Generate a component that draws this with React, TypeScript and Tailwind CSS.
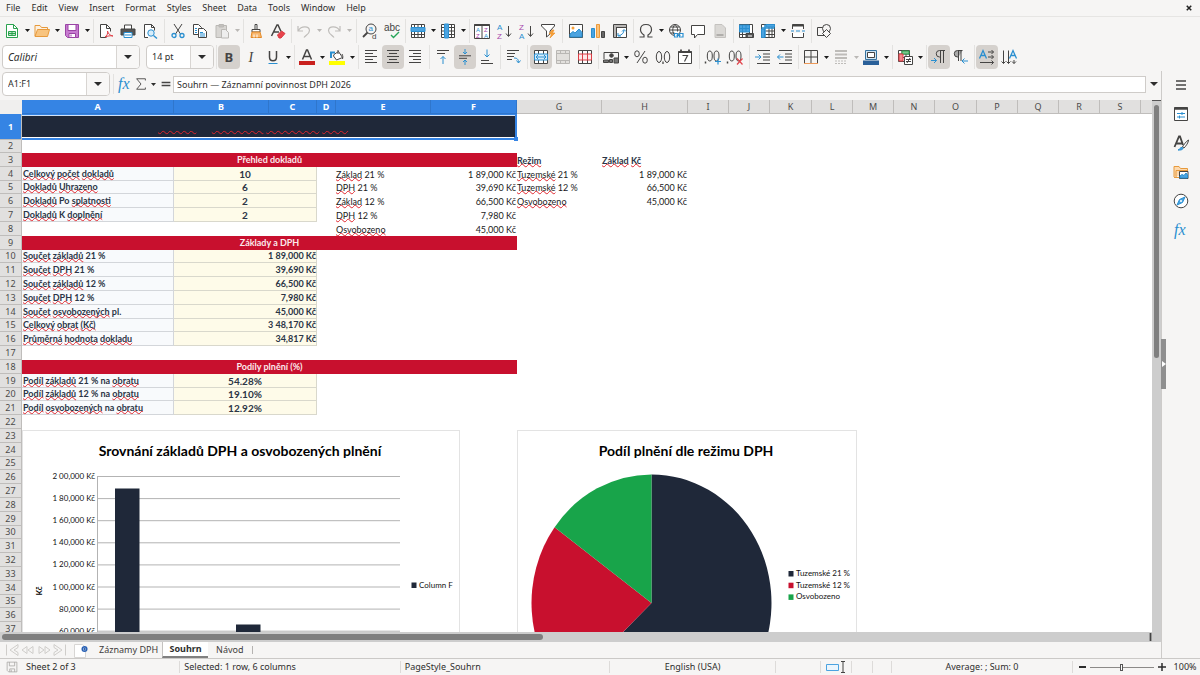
import React from 'react';
import clsx from 'clsx';

const INK = '#454443';
const BLUE = '#2a8fd0';
const NAVY = '#1f2839';
const RED = '#c8102e';
const GREEN = '#18a44a';

type IconProps = { children: React.ReactNode; className?: string };

const Icon: React.FC<IconProps> = ({ children, className }) => (
  <svg viewBox="0 0 16 16" fill="none" stroke={INK} strokeWidth={1} className={clsx('shrink-0 overflow-visible', className || 'size-4')} aria-hidden="true">
    {children}
  </svg>
);

const glyph = { stroke: 'none', fontFamily: 'Liberation Sans, sans-serif' };

const ICONS: Record<string, React.ReactNode> = {
  new: (
    <>
      <path d="M2.5 1.5h7l4 4v9h-11z" fill="#fff" stroke="#2ba24f" />
      <path d="M9.5 1.5v4h4" stroke="#2ba24f" />
      <path d="M4.5 8.5h7v4h-7zM4.5 10.5h7M8 8.5v4" fill="#bfe7c8" stroke="#2ba24f" />
    </>
  ),
  open: (
    <>
      <path d="M1 13V2.5h5l1.5 2h6V7" fill="#fdf0df" stroke="#e79a3c" />
      <path d="M1 13.5L3.5 6.5h12l-2 7z" fill="#f8c47f" stroke="#e79a3c" />
    </>
  ),
  save: (
    <>
      <path d="M1.5 1.5h13v13h-11l-2-2z" fill="#c77bd0" stroke="#9a44a5" />
      <path d="M4 1.5h8v6H4z" fill="#fff" stroke="#9a44a5" />
      <path d="M5 10.5h6.5v4H5z" fill="#fff" stroke="#9a44a5" />
      <path d="M7 11.5v2" stroke="#9a44a5" />
    </>
  ),
  pdf: (
    <>
      <path d="M2.5 14.5v-13h6l4 4v3M2.5 14.5h6" fill="#fff" />
      <path d="M8.5 1.5v4h4" />
      <path d="M7 14c2-1 3-3.5 2.5-6 .8 3 2.5 4.5 5.5 5-3-.6-5 0-8 1z" stroke="#e2434b" />
    </>
  ),
  print: (
    <>
      <path d="M4.5 6V2h7v4" fill="#fff" />
      <path d="M1 6h14v6H1z" fill="#555" />
      <path d="M4 9.5h8v5H4z" fill="#fff" stroke={BLUE} />
      <path d="M5 12h6" stroke={BLUE} />
    </>
  ),
  preview: (
    <>
      <path d="M6 14.5H2.5v-13h7l3 3v3" fill="#fff" />
      <path d="M9.5 1.5v3h3" />
      <circle cx="9" cy="10" r="3.2" fill="#d9eefb" stroke={BLUE} />
      <path d="M11.5 12.5L15 15.5" stroke={BLUE} strokeWidth="1.4" />
    </>
  ),
  cut: (
    <>
      <path d="M4 1l6.5 10M12 1L5.5 11" />
      <circle cx="4" cy="12.5" r="2" stroke={BLUE} strokeWidth="1.3" />
      <circle cx="12" cy="12.5" r="2" stroke={BLUE} strokeWidth="1.3" />
    </>
  ),
  copy: (
    <>
      <path d="M1.5 1.5h5l3 3v7h-8z" fill="#fff" />
      <path d="M6.5 5.5h5l3 3v6h-8z" fill="#fff" />
      <path d="M8 9.5h3M8 11h5M8 13h5M3 5.5h2M3 7.5h2M3 9.5h2" stroke={BLUE} />
    </>
  ),
  paste: (
    <>
      <path d="M2 2.5h10.5v12H2z" fill="#d8d6d3" stroke="#bab8b5" />
      <path d="M5 1.5h4.5V4H5z" fill="#c2c0bd" stroke="#bab8b5" />
      <path d="M7.5 6.5h4l3 3V15h-7z" fill="#eee" stroke="#bab8b5" />
    </>
  ),
  brush: (
    <>
      <path d="M7 1.5h2v5H7zM4 6.5h8V9H4z" fill="#fff" />
      <path d="M4 9l-1 5.5h10.5L12 9z" fill="#f7b76f" stroke="#e58a27" />
      <path d="M6 11.5v3M9 11.5v3" stroke="#fff" />
    </>
  ),
  clear: (
    <>
      <path d="M1.5 13L7 2h1l3 6.5M4 9h5" strokeWidth="1.5" />
      <path d="M7.5 12l4-4 3.5 2.5-4 4.5h-2z" fill="#e8444c" stroke="#d93a42" />
    </>
  ),
  undo: <path d="M2 3v5h5M2.5 7.5C5 3 13 2.5 13.5 7.5 13.5 11 10 12 8 14.5" stroke="#bfbdba" strokeWidth="1.2" />,
  redo: <path d="M14 3v5H9M13.5 7.5C11 3 3 2.5 2.5 7.5 2.5 11 6 12 8 14.5" stroke="#bfbdba" strokeWidth="1.2" />,
  find: (
    <>
      <circle cx="9" cy="6" r="5" />
      <path d="M5.5 9.5L1 14" strokeWidth="1.8" />
      <text x="6.5" y="8" fontSize="8" fill={BLUE} {...glyph}>a</text>
      <text x="10" y="15.5" fontSize="8" fill={INK} {...glyph}>d</text>
    </>
  ),
  spell: (
    <>
      <text x="0" y="8" fontSize="10" fill={INK} {...glyph}>abc</text>
      <path d="M7 12l2.5 2.5L15 9" stroke="#26a559" strokeWidth="1.4" />
    </>
  ),
  row: (
    <>
      <path d="M1.5 1.5h13v13h-13zM1.5 11.5h13M4.5 1.5v13M8 1.5v13M11.5 1.5v13" fill="#fff" />
      <path d="M1 4.5h14v4H1z" fill="#4ba3e0" stroke={BLUE} />
    </>
  ),
  column: (
    <>
      <path d="M1.5 1.5h13v13h-13zM1.5 4.5h13M1.5 8h13M1.5 11.5h13M11.5 1.5v13" fill="#fff" />
      <path d="M4.5 1h4v14h-4z" fill="#4ba3e0" stroke={BLUE} />
    </>
  ),
  sort: (
    <>
      <path d="M.5 1.5h15v14H.5zM8 2v13" fill="#fff" />
      <path d="M.5 2h15" strokeWidth="2" />
      <text x="2" y="8.5" fontSize="6" fill={BLUE} {...glyph}>A</text>
      <text x="2" y="14.5" fontSize="6" fill="#a646ab" {...glyph}>Z</text>
      <text x="10" y="8.5" fontSize="6" fill="#a646ab" {...glyph}>Z</text>
      <text x="10" y="14.5" fontSize="6" fill={BLUE} {...glyph}>A</text>
    </>
  ),
  sortAsc: (
    <>
      <text x="1" y="7" fontSize="8" fill={BLUE} {...glyph}>A</text>
      <text x="1" y="15.5" fontSize="8" fill="#a646ab" {...glyph}>Z</text>
      <path d="M12.5 3v10M10 10.5l2.5 3 2.5-3" />
    </>
  ),
  sortDesc: (
    <>
      <text x="1" y="7" fontSize="8" fill="#a646ab" {...glyph}>Z</text>
      <text x="1" y="15.5" fontSize="8" fill={BLUE} {...glyph}>A</text>
      <path d="M12.5 3v10M10 10.5l2.5 3 2.5-3" />
    </>
  ),
  filter: (
    <>
      <path d="M1.5 1.5h13V3L10 8v3l-3.5 3V8L1.5 3z" fill="#fff" />
      <path d="M12 7l-3 4h2.5L10 15l5-5h-2.5L14 7z" fill="#f7a23b" stroke="#ec8b1f" strokeWidth=".6" />
    </>
  ),
  image: (
    <>
      <path d="M1.5 1.5h13v13h-13z" fill="#fff" />
      <circle cx="5" cy="5" r="1.5" fill="#f7a23b" stroke="none" />
      <path d="M2 14v-3l3-2.5 2 1.5 4-4 3 3.5V14z" fill="#4ba3e0" stroke={BLUE} />
    </>
  ),
  chart: (
    <>
      <path d="M1.5 5.5h3v9h-3z" fill="#4ba3e0" stroke={BLUE} />
      <path d="M6.5 1.5h3v13h-3z" fill="#fbc27a" stroke="#ed9a3a" />
      <path d="M11.5 8.5h3v6h-3z" fill="#666" />
    </>
  ),
  pivot: (
    <>
      <path d="M1.5 1.5h13v13h-13zM1.5 4.5h13M4.5 1.5v13" fill="#fff" />
      <path d="M2 2h12v2H2zM2 4h2v10H2z" fill="#b9b7b5" stroke="none" />
      <path d="M6 10v3h3M6.5 12.5c3 0 5.5-2.5 5.5-5.5M10 8.5l2-2 2 2" stroke={BLUE} />
    </>
  ),
  omega: <path d="M1.5 14H6v-2C3.5 10.5 2.5 9 2.5 6.5c0-3 2.2-5 5.5-5s5.5 2 5.5 5c0 2.5-1 4-3.5 5.5v2h4.5" strokeWidth="1.2" />,
  link: (
    <>
      <circle cx="7" cy="7" r="5.5" fill="#fff" />
      <path d="M1.5 7h11M2.5 4h9M2.5 10h4M7 1.5c-3 3-3 8 0 11M7 1.5c2.5 2.5 3 5 2.5 7" />
      <path d="M6.5 10.5h3V14h-3zM11.5 10.5H15V14h-3.5zM8.5 12.3h4" fill="#fff" stroke={BLUE} strokeWidth="1.2" />
    </>
  ),
  comment: <path d="M1.5 2.5h13v9h-7L4.5 15v-3.5h-3z" fill="#fff" />,
  headerFooter: (
    <>
      <path d="M3 1.5h7L13.5 5v9.5H3z" fill="#dad8d5" stroke="#c4c2bf" />
      <path d="M4.5 12h7" stroke="#b0aeab" strokeWidth="2" />
    </>
  ),
  printArea: (
    <>
      <path d="M1.5 1.5h13v13h-13zM1.5 11.5h13M4.5 1.5v13M11.5 1.5v13" fill="#fff" />
      <path d="M1.5 2h10v7h-10zM4.5 2v7M8 2v7M1.5 5.5h10" fill="#4ba3e0" stroke={BLUE} />
      <path d="M8 10.5h7.5v4H8z" fill="#555" />
      <path d="M10 13h4" stroke="#fff" />
    </>
  ),
  freeze: (
    <>
      <path d="M1.5 1.5h13v13h-13zM5.5 8h9M5.5 11.5h9M9 1.5v13M12 1.5v13" fill="#fff" />
      <path d="M1.5 5h13M5 1.5v13" stroke={BLUE} strokeWidth="1.5" />
      <path d="M1.5 6h3v8.5h-3zM6 1.5h8.5V4H6z" fill="#4ba3e0" stroke={BLUE} />
    </>
  ),
  split: (
    <>
      <path d="M2.5 6V1.5h11V6M2.5 10v4.5h11V10" fill="#fff" />
      <path d="M2.5 2.5h11" strokeWidth="2" />
      <path d="M1 8h3M6 8h4M12 8h3" stroke={BLUE} />
    </>
  ),
  shapes: (
    <>
      <path d="M1.5 4.5h8v8h-8z" />
      <circle cx="10.5" cy="5.5" r="4" fill="#f6f5f4" />
      <path d="M10.5 6.5l4 4-4 4-4-4z" fill="#f6f5f4" />
    </>
  ),
  bold: <text x="3.5" y="12.5" fontSize="13" fontWeight="700" fill={INK} stroke="none" fontFamily="Noto Sans, sans-serif">B</text>,
  italic: <text x="5.5" y="12.5" fontSize="14" fontStyle="italic" fill={INK} stroke="none" fontFamily="Liberation Serif, serif">I</text>,
  underline: (
    <>
      <path d="M4.5 2v6c0 5 7 5 7 0V2" strokeWidth="1.5" />
      <path d="M3.5 14.5h9" stroke={BLUE} />
    </>
  ),
  fontColor: (
    <>
      <path d="M3.5 10.5L7.5 1h1l4 9.5M5 7.5h6" strokeWidth="1.5" />
      <path d="M0 12h16v4H0z" fill="#c9211e" stroke="none" />
    </>
  ),
  highlight: (
    <>
      <path d="M5 5.5l4.5-3 4 6L7.5 11l-3-4z" fill="#fff" />
      <path d="M9 1v4M13 5c1 2 1 3 .5 5" />
      <path d="M2 9V3.5h4" stroke={BLUE} strokeWidth="2" />
      <path d="M0 12h16v4H0z" fill="#ffff00" stroke="none" />
    </>
  ),
  alignLeft: <path d="M2 1.5h12M2 4.5h8M2 7.5h12M2 10.5h8M2 13.5h12" />,
  alignCenter: <path d="M2 1.5h12M4 4.5h8M2 7.5h12M4 10.5h8M2 13.5h12" />,
  alignRight: <path d="M2 1.5h12M6 4.5h8M2 7.5h12M6 10.5h8M2 13.5h12" />,
  alignTop: (
    <>
      <path d="M2 1.5h12M2 4.5h8" />
      <path d="M8 15V7.5M5.5 10L8 7.5l2.5 2.5" stroke={BLUE} />
    </>
  ),
  alignMiddle: (
    <>
      <path d="M2 6.8h12M2 9.3h8" />
      <path d="M8 0v5M6 3l2 2 2-2M8 16v-5M6 13l2-2 2 2" stroke={BLUE} />
    </>
  ),
  alignBottom: (
    <>
      <path d="M2 11.5h8M2 14.5h12" />
      <path d="M8 .5V8M5.5 5.5L8 8l2.5-2.5" stroke={BLUE} />
    </>
  ),
  wrap: (
    <>
      <path d="M2 1.5h12M2 4.5h8M2 7.5h7M2 10.5h5" />
      <path d="M9 9c3 0 4.5 1 4.5 4.5M11.5 11.5l2 2.5 2-2.5" stroke={BLUE} />
    </>
  ),
  merge: (
    <>
      <path d="M1.5 1.5h13v13h-13zM5.5 1.5v13M10.5 1.5v13" fill="#fff" />
      <path d="M1.5 5h13v6h-13z" fill="#d5ecfb" stroke={BLUE} />
      <path d="M3 8h10M5 6L3 8l2 2M11 6l2 2-2 2" stroke={BLUE} />
    </>
  ),
  mergeCells: <path d="M1.5 1.5h13v13h-13zM5.5 1.5v3M10.5 1.5v3M5.5 11.5v3M10.5 11.5v3M1.5 4.5h13v7h-13z" fill="#e2e0dd" stroke="#b9b7b4" />,
  unmerge: (
    <>
      <path d="M1.5 1.5h13v13h-13zM5.5 1.5v13M10.5 1.5v13" fill="#fff" />
      <path d="M1.5 5h13v6h-13zM5.5 5v6M10.5 5v6" fill="#fde8e8" stroke="#dc3c44" />
    </>
  ),
  currency: (
    <>
      <path d="M1 10V3.5h14.5V9" />
      <circle cx="8.5" cy="6.5" r="1.8" fill={INK} />
      <path d="M.5 13.5V11h5v2.5zM6.5 10.5h3v3h-3zM11 9h4.5v5H11z" fill="#777" />
    </>
  ),
  percent: (
    <>
      <ellipse cx="4" cy="4.8" rx="2.3" ry="3" />
      <ellipse cx="12" cy="11.2" rx="2.3" ry="3" />
      <path d="M12 2L4 14" />
    </>
  ),
  number: (
    <>
      <ellipse cx="4" cy="8" rx="2.7" ry="5.5" />
      <ellipse cx="12" cy="8" rx="2.7" ry="5.5" />
      <path d="M8 12.5V15" strokeWidth="1.3" />
    </>
  ),
  date: (
    <>
      <path d="M1.5 2.5h13v12h-13z" fill="#fff" />
      <path d="M1.5 3h13M4 .5v3M12 .5v3" strokeWidth="1.8" />
      <path d="M5.5 6.5h5l-3 6" strokeWidth="1.2" />
    </>
  ),
  addDecimal: (
    <>
      <path d="M.5 12.5v2" strokeWidth="1.5" />
      <ellipse cx="4.8" cy="7" rx="2.5" ry="5" />
      <ellipse cx="11.5" cy="7" rx="2.5" ry="5" />
      <path d="M13 9.5v6M10 12.5h6" stroke={BLUE} strokeWidth="1.2" />
    </>
  ),
  delDecimal: (
    <>
      <path d="M.5 12.5v2" strokeWidth="1.5" />
      <ellipse cx="4.8" cy="7" rx="2.5" ry="5" />
      <ellipse cx="11.5" cy="7" rx="2.5" ry="5" />
      <path d="M10 9.5l5.5 6M15.5 9.5l-5.5 6" stroke="#e2434b" strokeWidth="1.2" />
    </>
  ),
  indent: (
    <>
      <path d="M2 1.5h13M8 5h7M8 8h7M8 11h7M2 14.5h13" />
      <path d="M0 8h6M3.5 5.5L6 8l-2.5 2.5" stroke={BLUE} />
    </>
  ),
  outdent: (
    <>
      <path d="M2 1.5h13M8 5h7M8 8h7M8 11h7M2 14.5h13" />
      <path d="M.5 8h6M3 5.5L.5 8 3 10.5" stroke={BLUE} />
    </>
  ),
  borders: (
    <>
      <path d="M1.5 14V1.5h13V14M8 1.5V14M1.5 8h13" />
      <path d="M1 14.5h14" stroke="#ed9a5a" />
    </>
  ),
  borderStyle: (
    <>
      <path d="M2 2h12M2 5.5h12M2 9h12" stroke="#bebcb9" strokeWidth="1.8" />
      <path d="M2 12h12M2 14.5h12" stroke="#bebcb9" strokeDasharray="2 1" />
    </>
  ),
  borderColor: (
    <>
      <path d="M2.5 1.5h11v9h-11z" fill="#cfe5f5" stroke="#35729f" />
      <path d="M4.5 3.5h7v5h-7z" fill="#fff" />
      <path d="M0 11.5h16V16H0z" fill="#2a6099" stroke="none" />
    </>
  ),
  conditional: (
    <>
      <path d="M1.5 1.5h11v11h-11zM1.5 5h11M1.5 8.5h11M5 1.5v11M9 1.5v11" fill="#fff" />
      <path d="M5 2h7v3H5z" fill="#7cc68d" stroke="#2ba24f" />
      <path d="M2 5h4v7H2z" fill="#f08a8f" stroke="#dc3c44" />
      <path d="M7.5 7.5h8v8h-8z" fill="#fff" />
      <path d="M9 10.5h5M9 12.5h5M13 9l-3 5" />
    </>
  ),
  ltr: (
    <>
      <path d="M9.5 14V1.5M12.5 14V1.5M14 1.5H8.5a3.2 3.2 0 000 6.5h1" />
      <path d="M0 11.5h5.5M3 9l2.5 2.5L3 14" stroke={BLUE} />
    </>
  ),
  rtl: (
    <>
      <path d="M5.5 12V1.5M8 12V1.5M9.5 1.5h-5a3.2 3.2 0 000 6.5h1" fill="#aaa" />
      <path d="M9 12h6M11.5 9.5L9 12l2.5 2.5" stroke={BLUE} />
    </>
  ),
  textHorizontal: (
    <>
      <path d="M.5 9.5L4 1.5l3.5 8M1.8 6.5h4.5" stroke={BLUE} strokeWidth="1.3" />
      <path d="M9 3h5.5M9 8h5.5M1 13.5h13.5M12.5 1l2 2-2 2M12.5 6l2 2-2 2M12.5 11.5l2 2-2 2" />
    </>
  ),
  textVertical: (
    <>
      <path d="M8.5 9.5L12 1.5l3.5 8M9.8 6.5h4.5" stroke={BLUE} strokeWidth="1.3" />
      <path d="M2.5 1.5v13M7.5 1.5v13M13 11v3.5M.5 12.5l2 2 2-2M5.5 12.5l2 2 2-2M11 12.5l2 2 2-2" />
    </>
  ),
  fx: <text x="1" y="13" fontSize="16" fontStyle="italic" fill={BLUE} stroke="none" fontFamily="Liberation Serif, serif">fx</text>,
  sum: <path d="M13 4V2H3l5 6-5 6h10v-2" />,
  equals: <path d="M1 5.5h14M1 10.5h14" strokeWidth="2.5" />,
  menu: <path d="M3 4h10M3 8h10M3 12h10" strokeWidth="1.7" />,
  properties: (
    <>
      <path d="M1.5 1.5h13v13h-13z" fill="#fff" />
      <path d="M1.5 2.5h13" strokeWidth="2.5" />
      <path d="M4 7.5h8M4 11h8M9 6v3M6.5 9.5v3" stroke={BLUE} />
    </>
  ),
  styles: (
    <>
      <path d="M1.5 12L6 1.5h1L10 10M3 8.5h6" strokeWidth="1.8" />
      <path d="M15.5 5c-2 1-5 5-6 7l1.5 1c2-2 4.5-5.5 4.5-8z" fill="#fff" />
      <path d="M5 15c1.5 0 2-3 4-2.5s1 3-4 2.5z" fill="#4ba3e0" stroke={BLUE} />
    </>
  ),
  gallery: (
    <>
      <path d="M1 13V2.5h5l1.5 2h7V7M1 13.5h5M3 13V6.5h12" fill="#fdd9ae" stroke="#e79a3c" />
      <path d="M6.5 7.5H15v7H6.5z" fill="#fff" />
      <path d="M7 14v-2l2-1.5 2 1L13 9l1.5 2v3z" fill="#4ba3e0" stroke={BLUE} />
    </>
  ),
  navigator: (
    <>
      <circle cx="8" cy="8" r="6.8" fill="#fff" />
      <path d="M12 4L9.5 9.5 4 12l2.5-5.5z" fill="#4ba3e0" stroke={BLUE} />
      <circle cx="8" cy="8" r="1" fill="#fff" stroke="none" />
    </>
  ),
  saveMuted: <path d="M1.5 1.5h13v13h-11l-2-2zM4.5 1.5v5h7v-5M5 14.5v-4h6.5v4M7 11.5v3" stroke="#a5a3a0" />,
};

type ToolState = { menu?: boolean; active?: boolean; disabled?: boolean };
type Tool = ({ icon: string; label: string } & ToolState) | 'narrow' | 'wide';

const t = (icon: string, label: string, state: ToolState = {}): Tool => ({ icon, label, ...state });

const STANDARD: Tool[] = [
  t('new', 'New', { menu: true }), t('open', 'Open', { menu: true }), t('save', 'Save', { menu: true }),
  'narrow',
  t('pdf', 'Export as PDF'), t('print', 'Print'), t('preview', 'Print Preview'),
  'wide',
  t('cut', 'Cut'), t('copy', 'Copy'), t('paste', 'Paste', { menu: true, disabled: true }),
  'narrow',
  t('brush', 'Clone Formatting'), t('clear', 'Clear Formatting'),
  'narrow',
  t('undo', 'Undo', { menu: true, disabled: true }), t('redo', 'Redo', { menu: true, disabled: true }),
  'wide',
  t('find', 'Find & Replace'), t('spell', 'Spelling'),
  'narrow',
  t('row', 'Row', { menu: true }), t('column', 'Column', { menu: true }),
  'narrow',
  t('sort', 'Sort'), t('sortAsc', 'Sort Ascending'), t('sortDesc', 'Sort Descending'), t('filter', 'AutoFilter'),
  'wide',
  t('image', 'Insert Image'), t('chart', 'Insert Chart'), t('pivot', 'Insert Pivot Table'),
  'narrow',
  t('omega', 'Special Character', { menu: true }), t('link', 'Hyperlink'), t('comment', 'Comment'), t('headerFooter', 'Headers and Footers', { disabled: true }),
  'narrow',
  t('printArea', 'Define Print Area'), t('freeze', 'Freeze', { menu: true }), t('split', 'Split Window'),
  'narrow',
  t('shapes', 'Show Draw Functions'),
];

const FORMATTING: Tool[] = [
  'narrow',
  t('bold', 'Bold', { active: true }), t('italic', 'Italic'), t('underline', 'Underline', { menu: true }),
  'narrow',
  t('fontColor', 'Font Color', { menu: true }), t('highlight', 'Background Color', { menu: true }),
  'narrow',
  t('alignLeft', 'Align Left'), t('alignCenter', 'Center Horizontally', { active: true }), t('alignRight', 'Align Right'),
  'wide',
  t('alignTop', 'Align Top'), t('alignMiddle', 'Center Vertically', { active: true }), t('alignBottom', 'Align Bottom'),
  'narrow',
  t('wrap', 'Wrap Text'),
  'wide',
  t('merge', 'Merge and Center Cells', { active: true }), t('mergeCells', 'Merge Cells', { disabled: true }), t('unmerge', 'Unmerge Cells'),
  'narrow',
  t('currency', 'Format as Currency', { menu: true }), t('percent', 'Format as Percent'), t('number', 'Format as Number'), t('date', 'Format as Date'),
  'wide',
  t('addDecimal', 'Add Decimal Place'), t('delDecimal', 'Delete Decimal Place'),
  'wide',
  t('indent', 'Increase Indent'), t('outdent', 'Decrease Indent'),
  'narrow',
  t('borders', 'Borders', { menu: true }), t('borderStyle', 'Border Style', { menu: true, disabled: true }), t('borderColor', 'Border Color', { menu: true }),
  'narrow',
  t('conditional', 'Conditional', { menu: true }),
  'narrow',
  t('ltr', 'Left-To-Right', { active: true }), t('rtl', 'Right-To-Left'),
  'narrow',
  t('textHorizontal', 'Text direction from left to right', { active: true }), t('textVertical', 'Text direction from top to bottom'),
];

const Caret: React.FC<{ className?: string }> = ({ className }) => (
  <svg viewBox="0 0 8 5" preserveAspectRatio="none" className={clsx('shrink-0', className)} aria-hidden="true">
    <path d="M0 0h8L4 5z" fill="currentColor" />
  </svg>
);

const ToolButtons: React.FC<{ items: Tool[] }> = ({ items }) => (
  <>
    {items.map((item, i) => {
      if (typeof item === 'string') {
        return (
          <span key={i} className={clsx('flex h-6 shrink-0 justify-center', item === 'wide' ? 'w-1.5' : 'w-1')}>
            <span className="h-full w-px bg-[#e3e2e0]" />
          </span>
        );
      }
      return (
        <React.Fragment key={i}>
          <button
            aria-label={item.label}
            disabled={item.disabled}
            className={clsx('flex h-6 w-[22px] shrink-0 items-center justify-center rounded', item.active && 'bg-[#d5d1cd]')}
          >
            <Icon>{ICONS[item.icon]}</Icon>
          </button>
          {item.menu && (
            <button aria-label={`${item.label} options`} className={clsx('flex h-6 w-2 shrink-0 items-center justify-center', item.disabled ? 'text-[#bab8b5]' : 'text-[#1c1c1c]')}>
              <Caret className="h-[3px] w-[5px]" />
            </button>
          )}
        </React.Fragment>
      );
    })}
  </>
);

type ComboProps = { label: string; value: string; inputClass: string };

const Combo: React.FC<ComboProps> = ({ label, value, inputClass }) => (
  <div className="flex h-6 shrink-0 overflow-hidden rounded border border-[#cfccc9] bg-white">
    <input aria-label={label} defaultValue={value} className={clsx('min-w-0 px-[5px] outline-none', inputClass)} />
    <button aria-label={`${label} list`} className="flex w-[23px] items-center justify-center border-l border-[#d8d5d2] bg-[#f8f7f6] text-[#2c2c2c]">
      <Caret className="h-1 w-2" />
    </button>
  </div>
);

const MENUS = ['File', 'Edit', 'View', 'Insert', 'Format', 'Styles', 'Sheet', 'Data', 'Tools', 'Window', 'Help'];

const COLUMNS: [string, string][] = [
  ['A', 'w-[152px]'], ['B', 'w-[95px]'], ['C', 'w-[48px]'], ['D', 'w-[19px]'], ['E', 'w-[95px]'], ['F', 'w-[86px]'],
  ['G', 'w-[85px]'], ['H', 'w-[86px]'], ['I', 'w-[41px]'], ['J', 'w-[41px]'], ['K', 'w-[42px]'], ['L', 'w-[41px]'],
  ['M', 'w-[41px]'], ['N', 'w-[41px]'], ['O', 'w-[42px]'], ['P', 'w-[41px]'], ['Q', 'w-[41px]'], ['R', 'w-[41px]'], ['S', 'w-[41px]'],
];

type Row = { section?: string; label?: string; value?: string; center?: boolean; e?: string; f?: string; g?: string; h?: string; headings?: boolean };

const ROWS: Record<number, Row> = {
  3: { section: 'Přehled dokladů', g: 'Režim', h: 'Základ Kč', headings: true },
  4: { label: 'Celkový počet dokladů', value: '10', center: true, e: 'Základ 21 %', f: '1 89,000 Kč', g: 'Tuzemské 21 %', h: '1 89,000 Kč' },
  5: { label: 'Dokladů Uhrazeno', value: '6', center: true, e: 'DPH 21 %', f: '39,690 Kč', g: 'Tuzemské 12 %', h: '66,500 Kč' },
  6: { label: 'Dokladů Po splatnosti', value: '2', center: true, e: 'Základ 12 %', f: '66,500 Kč', g: 'Osvobozeno', h: '45,000 Kč' },
  7: { label: 'Dokladů K doplnění', value: '2', center: true, e: 'DPH 12 %', f: '7,980 Kč' },
  8: { e: 'Osvobozeno', f: '45,000 Kč' },
  9: { section: 'Základy a DPH' },
  10: { label: 'Součet základů 21 %', value: '1 89,000 Kč' },
  11: { label: 'Součet DPH 21 %', value: '39,690 Kč' },
  12: { label: 'Součet základů 12 %', value: '66,500 Kč' },
  13: { label: 'Součet DPH 12 %', value: '7,980 Kč' },
  14: { label: 'Součet osvobozených pl.', value: '45,000 Kč' },
  15: { label: 'Celkový obrat (Kč)', value: '3 48,170 Kč' },
  16: { label: 'Průměrná hodnota dokladu', value: '34,817 Kč' },
  18: { section: 'Podíly plnění (%)' },
  19: { label: 'Podíl základů 21 % na obratu', value: '54.28%', center: true },
  20: { label: 'Podíl základů 12 % na obratu', value: '19.10%', center: true },
  21: { label: 'Podíl osvobozených na obratu', value: '12.92%', center: true },
};

const ROW_NUMBERS = Array.from({ length: 37 }, (_, i) => i + 1);
const KNOWN_WORDS = ['Po', 'K', 'pl.', 'na', '%', '—'];

// Words missing from the English dictionary get the red wave
const Spelled: React.FC<{ text: string }> = ({ text }) => (
  <>
    {text.split(' ').map((word, i) => (
      <React.Fragment key={i}>
        {i > 0 && ' '}
        {KNOWN_WORDS.includes(word) || /^\d/.test(word) ? (
          word
        ) : (
          <span className="underline decoration-[#e0262e] decoration-wavy decoration-1 -underline-offset-1 [text-decoration-skip-ink:none]">{word}</span>
        )}
      </React.Fragment>
    ))}
  </>
);

const SheetRow: React.FC<{ n: number }> = ({ n }) => {
  const row = ROWS[n] || {};
  return (
    <tr className={n === 1 ? 'h-[26px]' : n === 2 || n % 5 === 0 ? 'h-[13px]' : 'h-[14px]'}>
      <th
        scope="row"
        className={clsx(
          'border-r border-b border-[#bfbdbb] p-0 text-center align-middle font-["Noto_Sans",sans-serif] leading-3',
          n === 1 ? 'bg-[#3584e4] font-bold text-white' : 'bg-[#e1e0df] font-normal text-[#4c4b4a]',
        )}
      >
        {n}
      </th>
      {n === 1 ? (
        <td colSpan={6} className="relative border-t border-r-2 border-b-2 border-[#3584e4] bg-[#1f2839] p-0 text-center align-middle text-[12px] leading-4 font-bold text-[#1f2839] shadow-[inset_0_1px_0_#cfe2f8,inset_0_-1px_0_#fff]">
          <Spelled text="Souhrn — Záznamní povinnost DPH 2026" />
          <span className="absolute -right-[3px] -bottom-[3px] size-1 bg-[#3584e4]" />
        </td>
      ) : row.section ? (
        <td colSpan={6} className="bg-[#c8102e] p-0 text-center align-middle font-bold text-[#fbe9ec]">
          {row.section}
        </td>
      ) : (
        <>
          <td className={clsx('p-0 pl-px align-middle font-bold text-[#2b3546]', row.label && 'border-r border-b border-[#d3d6da] bg-[#f8fafc]')}>
            {row.label && <Spelled text={row.label} />}
          </td>
          <td
            colSpan={2}
            className={clsx(
              'p-0 align-middle font-bold text-[#2b3546]',
              row.value && 'border-r border-b border-[#d9d8cc] bg-[#fefbe9]',
              row.center ? 'text-center text-[10px]' : 'text-right',
            )}
          >
            {row.value}
          </td>
          <td className="p-0" />
          <td className="p-0 align-bottom">{row.e && <Spelled text={row.e} />}</td>
          <td className="p-0 pr-px text-right align-bottom">{row.f}</td>
        </>
      )}
      <td className={clsx('p-0 align-bottom', row.headings && 'font-bold text-[#2b3546]')}>{row.g && <Spelled text={row.g} />}</td>
      <td className={clsx('p-0 align-bottom', row.headings ? 'font-bold text-[#2b3546]' : 'pr-px text-right')}>
        {row.h && (row.headings ? <Spelled text={row.h} /> : row.h)}
      </td>
      <td colSpan={12} className="p-0" />
    </tr>
  );
};

const AXIS = ['2 00,000 Kč', '1 80,000 Kč', '1 60,000 Kč', '1 40,000 Kč', '1 20,000 Kč', '1 00,000 Kč', '80,000 Kč', '60,000 Kč'];

const BarChart: React.FC = () => (
  <svg viewBox="0 0 438 300" className="absolute top-[330px] left-[22px] w-[438px] font-['Lato',sans-serif]" role="img" aria-label="Srovnání základů DPH a osvobozených plnění">
    <rect x="0.5" y="0.5" width="437" height="310" fill="#fff" stroke="#e3e3e3" />
    <text x="218" y="26" textAnchor="middle" fontSize="14" fontWeight="700" fill="#000">Srovnání základů DPH a osvobozených plnění</text>
    {AXIS.map((label, i) => (
      <g key={label}>
        <path d={`M75 ${46.5 + i * 22.1}h303`} stroke="#b3b3b3" />
        <text x="73" y={49 + i * 22.1} textAnchor="end" fontSize="8" fill="#111">{label}</text>
      </g>
    ))}
    <path d="M75.5 46v254" stroke="#b3b3b3" />
    <rect x="93" y="58.5" width="24.5" height="250" fill={NAVY} />
    <rect x="214" y="194.5" width="24.5" height="110" fill={NAVY} />
    <text transform="translate(20 161) rotate(-90)" textAnchor="middle" fontSize="8" fontWeight="700" fill="#000">Kč</text>
    <rect x="389.5" y="152.5" width="5" height="5.5" fill={NAVY} />
    <text x="397" y="158" fontSize="8" fill="#111">Column F</text>
  </svg>
);

const LEGEND: [string, string][] = [['Tuzemské 21 %', NAVY], ['Tuzemské 12 %', RED], ['Osvobozeno', GREEN]];

const PieChart: React.FC = () => (
  <svg viewBox="0 0 340 300" className="absolute top-[330px] left-[517px] w-[340px] font-['Lato',sans-serif]" role="img" aria-label="Podíl plnění dle režimu DPH">
    <rect x="0.5" y="0.5" width="339" height="310" fill="#fff" stroke="#e3e3e3" />
    <text x="169" y="26" textAnchor="middle" fontSize="14" fontWeight="700" fill="#000">Podíl plnění dle režimu DPH</text>
    <path d="M134.5 173V44.4A120 128.6 0 1 1 47.6 261.7z" fill={NAVY} />
    <path d="M134.5 173L47.6 261.7A120 128.6 0 0 1 37.6 97.2z" fill={RED} />
    <path d="M134.5 173L37.6 97.2A120 128.6 0 0 1 134.5 44.4z" fill={GREEN} />
    {LEGEND.map(([label, color], i) => (
      <g key={label}>
        <rect x="271.5" y={141 + i * 11.7} width="5" height="5.5" fill={color} />
        <text x="279" y={146 + i * 11.7} fontSize="8" fill="#111">{label}</text>
      </g>
    ))}
  </svg>
);

const Sheet: React.FC = () => (
  <div className="flex min-h-0 flex-1">
    <div className="relative min-w-0 flex-1 overflow-hidden bg-white">
      <table className="w-full table-fixed border-separate border-spacing-0 font-['Lato',sans-serif] text-[9px] leading-3 whitespace-nowrap text-[#1a1a1a]">
        <colgroup>
          <col className="w-[22px]" />
          {COLUMNS.map(([name, width]) => <col key={name} className={width} />)}
          <col />
        </colgroup>
        <thead>
          <tr className="h-[14px] font-['Noto_Sans',sans-serif]">
            <td className="bg-[#f0efee] p-0" />
            {COLUMNS.map(([name], i) => (
              <th
                key={name}
                scope="col"
                className={clsx('border-r border-b p-0', i < 6 ? 'border-[#2f76cc] bg-[#3584e4] font-bold text-white' : 'border-[#bfbdbb] bg-[#e1e0df] font-normal text-[#4c4b4a]')}
              >
                {name}
              </th>
            ))}
            <td className="border-b border-[#bfbdbb] bg-[#e1e0df] p-0" />
          </tr>
        </thead>
        <tbody>
          {ROW_NUMBERS.map((n) => <SheetRow key={n} n={n} />)}
        </tbody>
      </table>
      <BarChart />
      <PieChart />
    </div>
    <div className="w-[9px] shrink-0 border-t border-[#555] bg-[#cdcdcd] px-[2px] pt-1">
      <div className="h-[253px] rounded-full bg-[#7f7f7f]" />
    </div>
  </div>
);

const SheetTabs: React.FC = () => (
  <div className="flex h-4 shrink-0 items-stretch">
    <svg viewBox="0 0 60 12" className="my-auto ml-1.5 h-3 w-[60px]" fill="none" stroke="#cfcdca" aria-hidden="true">
      <path d="M.5.5v11M12 .5L4 6l8 5.5v-3L8 6l4-2.5zM21 2.5L16 6l5 3.5zM27 2.5L22 6l5 3.5zM33 2.5L38 6l-5 3.5zM39 2.5L44 6l-5 3.5zM48 .5L56 6l-8 5.5v-3L52 6l-4-2.5zM59.5.5v11" />
    </svg>
    <button aria-label="Add Sheet" className="ml-2 flex w-[14px] items-center">
      <svg viewBox="0 0 14 16" className="h-4 w-[14px]" aria-hidden="true">
        <path d="M.5 2.5h8l3 3v10H.5z" fill="#fff" stroke="#d8d6d4" />
        <circle cx="10.5" cy="7" r="2.3" fill="none" stroke="#2a62b5" strokeWidth="1.5" />
        <path d="M10.5 5.5v3M9 7h3" stroke="#2a62b5" />
      </svg>
    </button>
    <button className="ml-[11px] pr-1 text-[#3d3c3b]">Záznamy DPH</button>
    <button className="w-[46px] border-b-2 border-l border-b-[#808080] border-l-[#c4c2c0] bg-white text-center font-bold">Souhrn</button>
    <button className="px-2 text-[#3d3c3b]">Návod</button>
    <span className="my-auto h-2 w-px bg-[#b5b3b1]" />
  </div>
);

const SIDEBAR: [string, string][] = [
  ['menu', 'Sidebar Settings'], ['properties', 'Properties'], ['styles', 'Styles'], ['gallery', 'Gallery'], ['navigator', 'Navigator'], ['fx', 'Functions'],
];

const StatusBar: React.FC = () => (
  <footer className="flex h-[17px] shrink-0 items-center border-t border-[#cbc9c7] whitespace-nowrap [&>*+*]:border-l [&>*+*]:border-[#dddbd9] [&>*]:h-3 [&>*]:min-w-0">
    <div className="flex flex-[177] items-center gap-2 pl-1.5 leading-3">
      <Icon className="size-3">{ICONS.saveMuted}</Icon>
      Sheet 2 of 3
    </div>
    <div className="flex-[220] pl-1 leading-3">Selected: 1 row, 6 columns</div>
    <div className="flex-[209] pl-1 leading-3">PageStyle_Souhrn</div>
    <div className="flex-[168] text-center leading-3">English (USA)</div>
    <div className="flex-[45]" />
    <div className="flex flex-[31] items-center justify-center">
      <svg viewBox="0 0 20 12" className="h-3 w-5" fill="none" aria-hidden="true">
        <path d="M.5 3.5h12v6H.5z" fill="#eaf5fd" stroke="#4ba3e0" />
        <path d="M15 .5h4M15 11.5h4M17 .5v11" stroke={INK} />
      </svg>
    </div>
    <div className="flex-[20]" />
    <div className="flex-[19]" />
    <div className="flex-[183] text-center leading-3">Average: ; Sum: 0</div>
    <div className="flex flex-[124] items-center gap-1 pl-1.5 leading-3">
      <button aria-label="Zoom out" className="h-[2px] w-[7px] shrink-0 bg-[#2c2c2c]" />
      <input
        type="range"
        aria-label="Zoom"
        defaultValue={50}
        className="h-px w-[64px] shrink-0 appearance-none bg-[#8c8a88] [&::-webkit-slider-thumb]:h-[7px] [&::-webkit-slider-thumb]:w-[3px] [&::-webkit-slider-thumb]:appearance-none [&::-webkit-slider-thumb]:border [&::-webkit-slider-thumb]:border-[#555] [&::-webkit-slider-thumb]:bg-white"
      />
      <button aria-label="Zoom in" className="shrink-0">
        <svg viewBox="0 0 8 8" className="size-2" aria-hidden="true"><path d="M0 4h8M4 0v8" stroke="#2c2c2c" strokeWidth="1.5" /></svg>
      </button>
      <span className="ml-1">100%</span>
    </div>
  </footer>
);

const App: React.FC = () => {
  return (
    <div className="flex h-screen flex-col overflow-hidden bg-[#f6f5f4] font-['Noto_Sans',sans-serif] text-[9px] text-[#2e2e2d]">
      <nav className="flex h-[17px] shrink-0 items-center gap-[11px] border-b border-[#e6e5e3] pr-2 pl-1.5">
        {MENUS.map((name) => <button key={name}>{name}</button>)}
        <button aria-label="Close document" className="ml-auto">
          <svg viewBox="0 0 8 8" className="size-1.5" aria-hidden="true"><path d="M1 1l6 6M7 1L1 7" stroke="#222" strokeWidth="2" /></svg>
        </button>
      </nav>
      <div className="flex h-[27px] shrink-0 items-center pl-px">
        <ToolButtons items={STANDARD} />
      </div>
      <div className="flex h-[27px] shrink-0 items-center pb-px pl-0.5">
        <Combo label="Font Name" value="Calibri" inputClass="w-[113px] italic text-[10px]" />
        <span className="w-1.5 shrink-0" />
        <Combo label="Font Size" value="14 pt" inputClass="w-[43px]" />
        <ToolButtons items={FORMATTING} />
      </div>
      <div className="flex min-h-0 flex-1">
        <main className="flex min-w-0 flex-1 flex-col">
          <div className="flex h-[29px] shrink-0 items-center pb-[3px] pl-0.5">
            <Combo label="Name Box" value="A1:F1" inputClass="w-[83px]" />
            <span className="mx-[3px] h-5 w-px bg-[#e3e2e0]" />
            <button aria-label="Function Wizard" className="flex w-4 justify-center"><Icon>{ICONS.fx}</Icon></button>
            <button aria-label="Select Function" className="flex w-4 justify-center"><Icon className="size-3.5">{ICONS.sum}</Icon></button>
            <button aria-label="Select Function options" className="flex w-2 justify-center"><Caret className="h-[3px] w-[5px]" /></button>
            <button aria-label="Formula" className="ml-0.5 flex w-3.5 justify-center"><Icon className="size-2.5">{ICONS.equals}</Icon></button>
            <input
              aria-label="Input line"
              defaultValue="Souhrn — Záznamní povinnost DPH 2026"
              className="h-[17px] min-w-0 flex-1 border border-[#cfccc9] bg-white px-[3px] outline-none"
            />
            <button aria-label="Expand Formula Bar" className="flex w-[15px] justify-center"><Caret className="h-1 w-2" /></button>
          </div>
          <Sheet />
          <div className="flex h-[10px] shrink-0 items-center justify-between bg-[#cdcdcd] pr-[9px] pl-[2px]">
            <div className="h-1.5 w-[47%] rounded-full bg-[#7f7f7f]" />
            <div className="h-2 w-[3px] border-x border-[#999] bg-[#444]" />
          </div>
          <SheetTabs />
        </main>
        <aside className="relative flex w-[39px] shrink-0 flex-col items-center gap-[13px] border-l border-[#cdcbc9] pt-1.5">
          {SIDEBAR.map(([icon, label]) => (
            <button key={label} aria-label={label}><Icon>{ICONS[icon]}</Icon></button>
          ))}
          <button aria-label="Hide sidebar" className="absolute top-[268px] -left-px flex h-[50px] w-[5px] items-center justify-center bg-[#8f8f8f]">
            <svg viewBox="0 0 4 6" className="h-1.5 w-1" aria-hidden="true"><path d="M0 0l4 3-4 3z" fill="#fff" /></svg>
          </button>
        </aside>
      </div>
      <StatusBar />
    </div>
  );
};

export default App;
